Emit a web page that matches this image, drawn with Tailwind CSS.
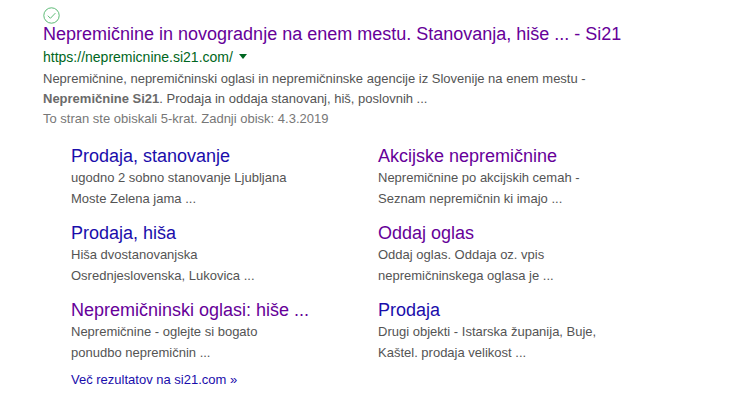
<!DOCTYPE html>
<html lang="sl">
<head>
  <meta charset="UTF-8" />
  <title>Nepremičnine Si21</title>
  <script src="https://cdn.jsdelivr.net/npm/@tailwindcss/browser@4"></script>
</head>
<body class="bg-white w-[740px] h-[400px] overflow-hidden font-['Liberation_Sans',Arial,sans-serif] text-[13px] text-[#545454]">
  <div class="pl-[43px] pt-[7px]">

    <!-- Visited check -->
    <svg class="block" width="17" height="17" viewBox="0 0 17 17" fill="none" stroke="#34a853" stroke-width="0.8">
      <circle cx="8.5" cy="8.5" r="7.7" />
      <path d="M4.8 8.7l2.6 2.6 5-5.2" />
    </svg>

    <!-- Main result -->
    <h3 class="text-[18px] leading-[21px] font-normal text-[#609] whitespace-nowrap">Nepremičnine in novogradnje na enem mestu. Stanovanja, hiše ... - Si21</h3>
    <div class="flex items-center h-[21px] mt-[2px] text-[14px] text-[#006621]">
      <span>https://nepremicnine.si21.com/</span>
      <span class="ml-[6px] mt-[-2px] w-0 h-0 border-x-[4px] border-x-transparent border-t-[5px] border-t-[#006621]"></span>
    </div>
    <p class="mt-[1px] leading-[20px] whitespace-nowrap">Nepremičnine, nepremičninski oglasi in nepremičninske agencije iz Slovenije na enem mestu -</p>
    <p class="leading-[20px] whitespace-nowrap"><b class="font-bold text-[#6a6a6a]">Nepremičnine Si21</b>. Prodaja in oddaja stanovanj, hiš, poslovnih ...</p>
    <p class="leading-[20px] text-[#777] whitespace-nowrap">To stran ste obiskali 5-krat. Zadnji obisk: 4.3.2019</p>

    <!-- Sitelinks -->
    <div class="grid grid-cols-[307px_1fr] gap-y-[14px] pl-[28px] mt-[17px]">
      <div>
        <h4 class="text-[18px] leading-[20px] font-normal text-[#1a0dab]">Prodaja, stanovanje</h4>
        <p class="mt-[1px] leading-[21px]">ugodno 2 sobno stanovanje Ljubljana<br />Moste Zelena jama ...</p>
      </div>
      <div>
        <h4 class="text-[18px] leading-[20px] font-normal text-[#609]">Akcijske nepremičnine</h4>
        <p class="mt-[1px] leading-[21px]">Nepremičnine po akcijskih cemah -<br />Seznam nepremičnin ki imajo ...</p>
      </div>
      <div>
        <h4 class="text-[18px] leading-[20px] font-normal text-[#1a0dab]">Prodaja, hiša</h4>
        <p class="mt-[1px] leading-[21px]">Hiša dvostanovanjska<br />Osrednjeslovenska, Lukovica ...</p>
      </div>
      <div>
        <h4 class="text-[18px] leading-[20px] font-normal text-[#609]">Oddaj oglas</h4>
        <p class="mt-[1px] leading-[21px]">Oddaj oglas. Oddaja oz. vpis<br />nepremičninskega oglasa je ...</p>
      </div>
      <div>
        <h4 class="text-[18px] leading-[20px] font-normal text-[#609]">Nepremičninski oglasi: hiše ...</h4>
        <p class="mt-[1px] leading-[21px]">Nepremičnine - oglejte si bogato<br />ponudbo nepremičnin ...</p>
      </div>
      <div>
        <h4 class="text-[18px] leading-[20px] font-normal text-[#1a0dab]">Prodaja</h4>
        <p class="mt-[1px] leading-[21px]">Drugi objekti - Istarska županija, Buje,<br />Kaštel. prodaja velikost ...</p>
      </div>
    </div>

    <div class="pl-[28px] mt-[7px] leading-[20px] text-[#1a0dab]">Več rezultatov na si21.com »</div>
  </div>
</body>
</html>
